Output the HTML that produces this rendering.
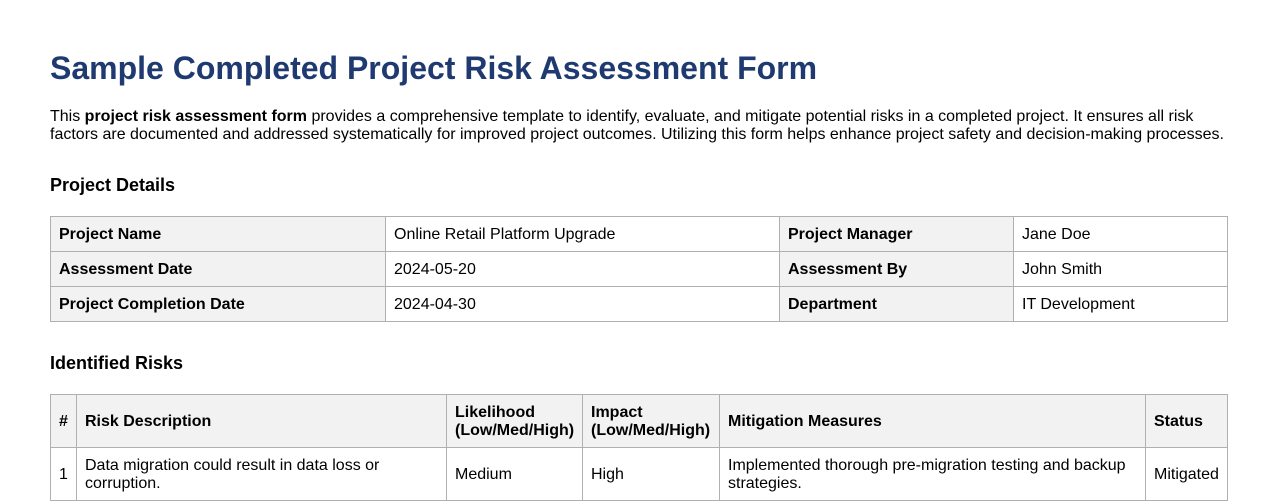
<!DOCTYPE html>
<html><head><meta charset="utf-8"><style>
body{margin:0;width:1278px;height:501px;overflow:hidden;background:#fff;font-family:"Liberation Sans",Arial,sans-serif;color:#000;position:relative}
h1{position:absolute;left:50px;top:49px;margin:0;font-size:32px;line-height:38px;color:#1f3a70;font-weight:bold}
p{position:absolute;left:50px;top:108px;margin:0;font-size:16px;line-height:18px;width:1178px}
h2{position:absolute;left:50px;margin:0;font-size:18px;line-height:22px;font-weight:bold}
table{position:absolute;left:50px;border-collapse:collapse;font-size:16px;table-layout:fixed}
td,th{border:1px solid #b0b0b0;padding:1px 8px 0 8px;text-align:left;vertical-align:middle;line-height:18px}
th{background:#f2f2f2;font-weight:bold}
</style></head><body>
<h1>Sample Completed Project Risk Assessment Form</h1>
<p>This <b>project risk assessment form</b> provides a comprehensive template to identify, evaluate, and mitigate potential risks in a completed project. It ensures all risk factors are documented and addressed systematically for improved project outcomes. Utilizing this form helps enhance project safety and decision-making processes.</p>
<h2 style="top:174px">Project Details</h2>
<table style="top:216px;width:1177px">
<colgroup><col style="width:335px"><col style="width:394px"><col style="width:234px"><col style="width:214px"></colgroup>
<tr style="height:35px"><th>Project Name</th><td>Online Retail Platform Upgrade</td><th>Project Manager</th><td>Jane Doe</td></tr>
<tr style="height:35px"><th>Assessment Date</th><td>2024-05-20</td><th>Assessment By</th><td>John Smith</td></tr>
<tr style="height:35px"><th>Project Completion Date</th><td>2024-04-30</td><th>Department</th><td>IT Development</td></tr>
</table>
<h2 style="top:352px">Identified Risks</h2>
<table style="top:394px;width:1177px">
<colgroup><col style="width:26px"><col style="width:370px"><col style="width:136px"><col style="width:137px"><col style="width:426px"><col style="width:82px"></colgroup>
<tr style="height:53px"><th>#</th><th>Risk Description</th><th>Likelihood (Low/Med/High)</th><th>Impact (Low/Med/High)</th><th>Mitigation Measures</th><th>Status</th></tr>
<tr style="height:53px"><td>1</td><td>Data migration could result in data loss or corruption.</td><td>Medium</td><td>High</td><td>Implemented thorough pre-migration testing and backup strategies.</td><td>Mitigated</td></tr>
</table>
</body></html>
